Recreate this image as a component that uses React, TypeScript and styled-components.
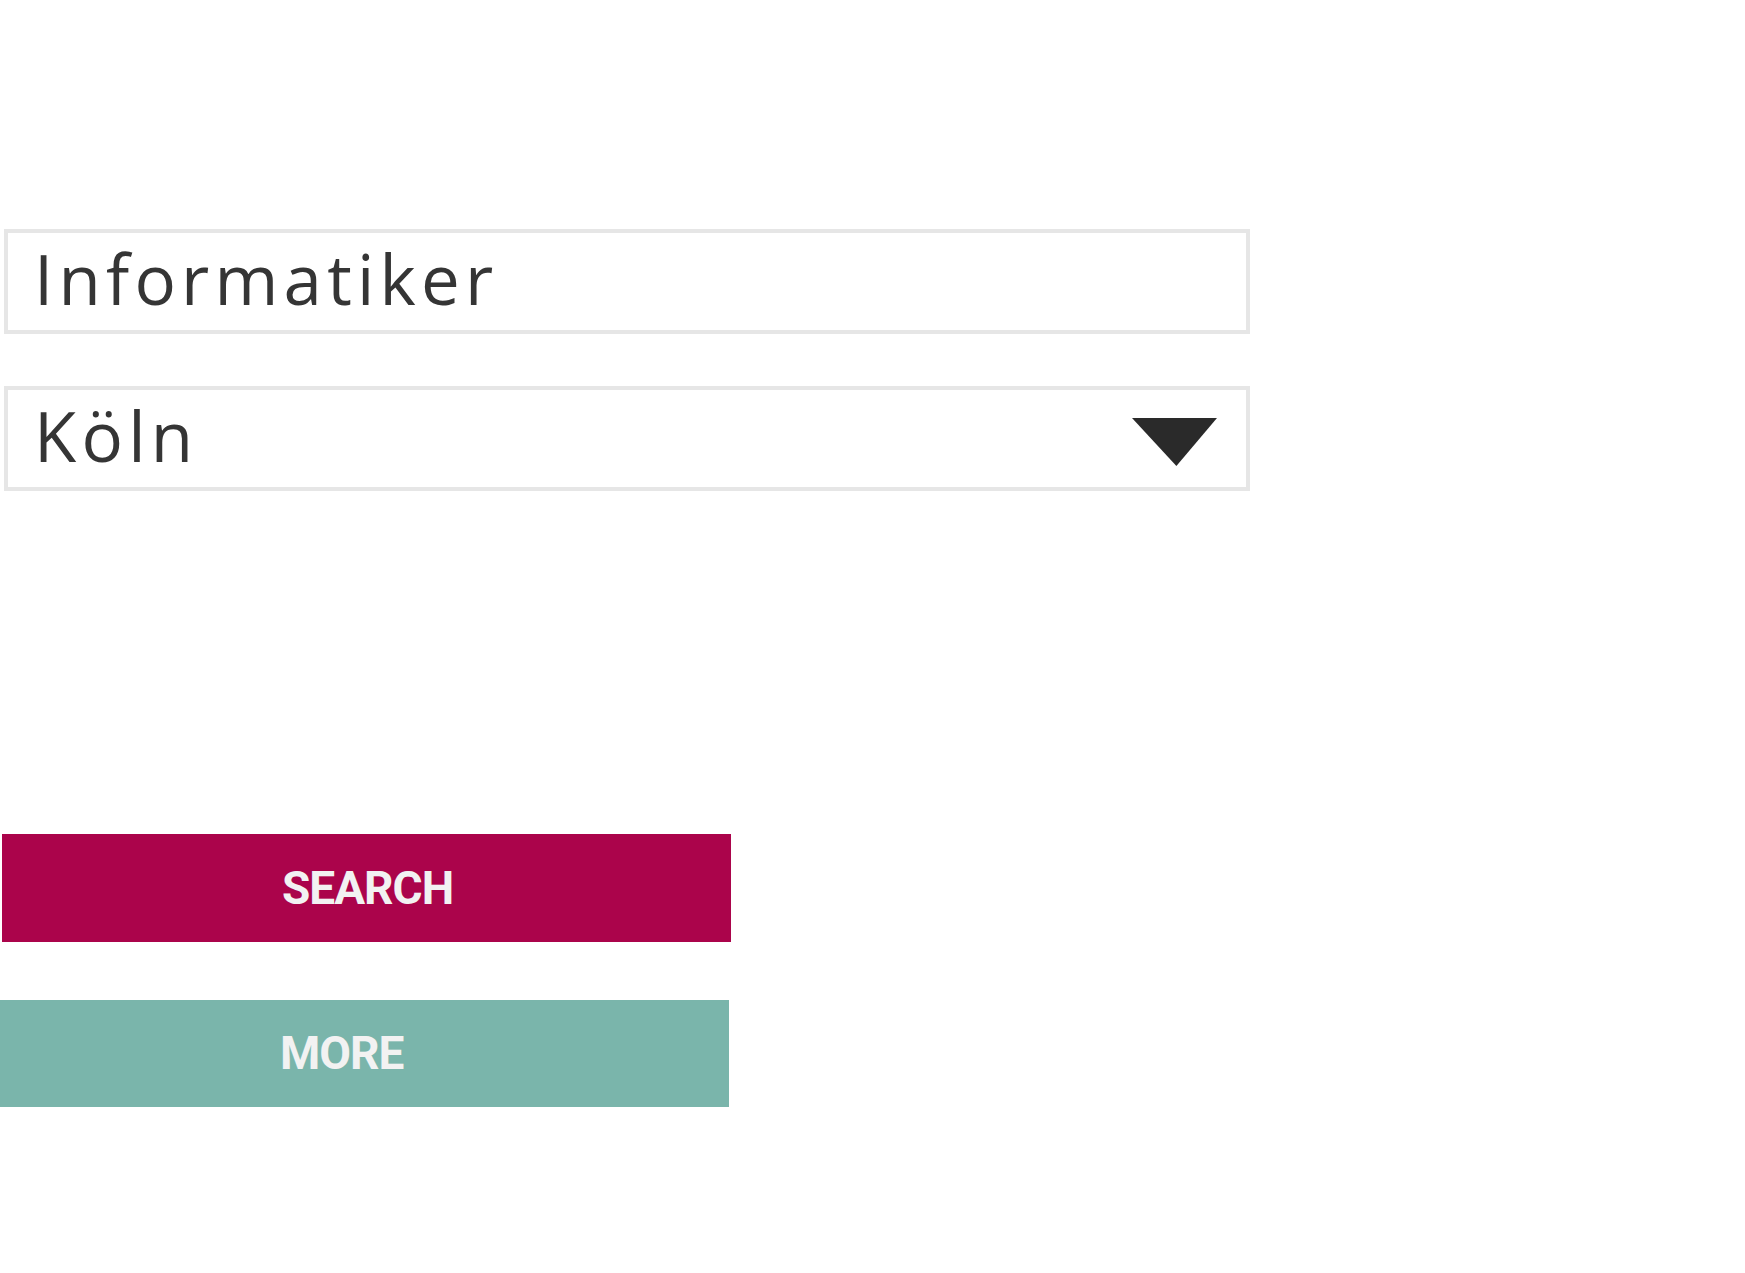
import React from "react";
import styled, { createGlobalStyle } from "styled-components";

const GlobalStyle = createGlobalStyle`
  html, body {
    margin: 0;
    padding: 0;
    background: #ffffff;
  }
  body {
    font-family: "Open Sans", "Liberation Sans", sans-serif;
  }
`;

const Page = styled.div`
  display: flex;
  flex-direction: column;
  padding-top: 229px;
  padding-bottom: 166px;
`;

const Fields = styled.div`
  display: flex;
  flex-direction: column;
  gap: 52px;
  margin-left: 4px;
  width: 1246px;
`;

const Field = styled.div`
  box-sizing: border-box;
  height: 105px;
  border: 4px solid #e6e6e6;
  display: flex;
  align-items: flex-start;
  justify-content: space-between;
  padding-left: 26px;
  font-family: "Open Sans", "Liberation Sans", sans-serif;
  font-size: 69px;
  line-height: 91px;
  letter-spacing: 5.2px;
  color: #353535;
  position: relative;
`;

const FieldText = styled.span`
  display: block;
  white-space: nowrap;
`;

const Arrow = styled.svg`
  position: absolute;
  right: 29px;
  top: 28px;
  width: 85px;
  height: 48px;
`;

const Buttons = styled.div`
  display: flex;
  flex-direction: column;
  gap: 58px;
  margin-top: 343px;
`;

const ActionButton = styled.button<{ $bg: string; $offset: number; $height: number }>`
  box-sizing: border-box;
  display: block;
  width: 729px;
  height: ${(p) => p.$height}px;
  margin: 0 0 0 ${(p) => p.$offset}px;
  padding: 0 0 0 280px;
  border: none;
  background: ${(p) => p.$bg};
  color: #f2f2f2;
  font-family: Roboto, "Liberation Sans", sans-serif;
  font-weight: 700;
  font-size: 46px;
  letter-spacing: -1px;
  line-height: ${(p) => p.$height}px;
  text-align: left;
  text-transform: uppercase;
  cursor: pointer;
`;

export default function App() {
  return (
    <>
      <GlobalStyle />
      <Page>
        <Fields>
          <Field>
            <FieldText>Informatiker</FieldText>
          </Field>
          <Field>
            <FieldText>Köln</FieldText>
            <Arrow viewBox="0 0 85 48" aria-hidden="true">
              <polygon points="0,0 85,0 44.4,48" fill="#2a2a2a" />
            </Arrow>
          </Field>
        </Fields>
        <Buttons>
          <ActionButton $bg="#ab044b" $offset={2} $height={108}>
            Search
          </ActionButton>
          <ActionButton $bg="#7ab5ab" $offset={0} $height={107}>
            More
          </ActionButton>
        </Buttons>
      </Page>
    </>
  );
}
